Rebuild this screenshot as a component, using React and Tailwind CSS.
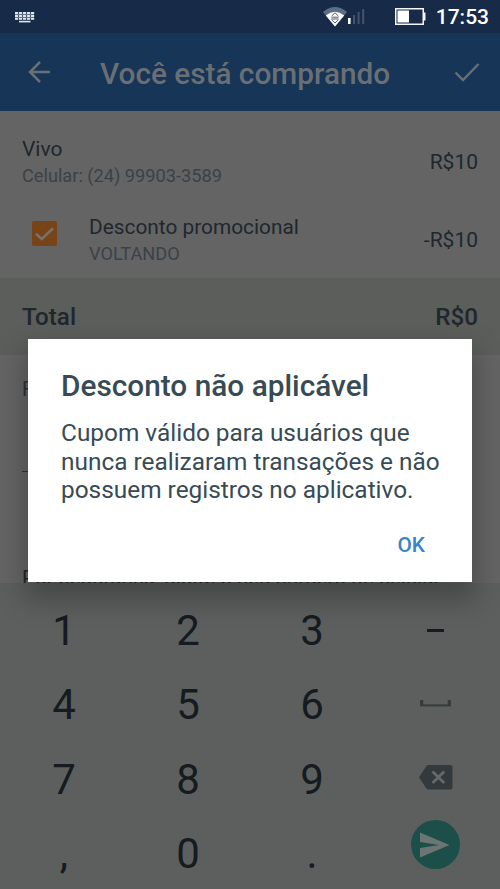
import React, { useState } from 'react';

const KeyboardIcon = () => (
    <svg width="20" height="12" viewBox="0 0 20 12" fill="#dfe6ee">
        {[0, 4, 8, 12, 16].map((x) => (
            <g key={x}>
                <rect x={x} y="1" width="3.2" height="2" />
                <rect x={x} y="4" width="3.2" height="2" />
                <rect x={x} y="7" width="3.2" height="1.8" />
            </g>
        ))}
        <rect x="4" y="9.8" width="11.5" height="1.6" />
        <path d="M0 3.5h19M0 6.5h19" stroke="#dfe6ee" strokeWidth="0.4" />
    </svg>
);

const WifiIcon = () => (
    <svg width="24" height="20" viewBox="0 0 24 20">
        <path d="M0 5Q12 -5 24 5L12 19.5Z" fill="#5f6d83" />
        <path d="M2.8 8.4Q12 1.2 21.2 8.4L12 19.5Z" fill="#fff" />
        <path d="M8.6 9L12 5.8L15.4 9M8.6 12.8L12 16L15.4 12.8M8.4 10.2h7.2M8.4 12h7.2" fill="none" stroke="#3c4a61" strokeWidth="0.9" />
    </svg>
);

const SignalIcon = () => (
    <svg width="17" height="15" viewBox="0 0 17 15">
        <rect x="0" y="9" width="2.6" height="6" fill="#fff" />
        <rect x="5" y="6" width="2" height="9" fill="#45536b" />
        <rect x="9.6" y="3" width="2" height="12" fill="#45536b" />
        <rect x="14.2" y="0" width="2" height="15" fill="#45536b" />
    </svg>
);

const BatteryIcon = () => (
    <svg width="31" height="17" viewBox="0 0 31 17">
        <rect x="0.75" y="0.75" width="27.5" height="15.5" fill="none" stroke="#f4f6f8" strokeWidth="1.5" />
        <rect x="2.5" y="2.5" width="11.5" height="12" fill="#fff" />
        <rect x="28" y="4.5" width="2.5" height="8" fill="#f4f6f8" />
    </svg>
);

const SpaceIcon = () => (
    <svg width="31" height="7" viewBox="0 0 31 7">
        <path d="M1.7 0V5.4M29.3 0V5.4" stroke="#363c3e" strokeWidth="3.2" />
        <path d="M0.1 5.4H30.9" stroke="#363c3e" strokeWidth="2" />
    </svg>
);

const BackspaceIcon = () => (
    <svg width="34" height="25" viewBox="0 0 34 25">
        <path d="M9.5 0H31.5Q33.5 0 33.5 2V22.5Q33.5 24.5 31.5 24.5H9.5Q8 24.5 7.2 23.3L0 12.2L7.2 1.2Q8 0 9.5 0Z" fill="#333a3d" />
        <path d="M13.5 6.5L25.2 18M25.2 6.5L13.5 18" stroke="#656968" strokeWidth="2.8" />
    </svg>
);

const SendIcon = () => (
    <span className="flex h-[49px] w-[49px] items-center justify-center rounded-full bg-[#1d4f4a]">
        <svg width="30" height="26" viewBox="0 0 30 26">
            <path d="M0 0.5L29.5 13L0 25.5V16L19 13L0 10Z" fill="#6b7573" />
        </svg>
    </span>
);

const keys = ['1', '2', '3', '–', '4', '5', '6', 'space', '7', '8', '9', 'backspace', ',', '0', '.', 'send'];

const Key = ({ value }) => {
    if (value === 'space') return <span className="pr-px pb-[4px]"><SpaceIcon /></span>;
    if (value === 'backspace') return <span className="pr-px pb-[4px]"><BackspaceIcon /></span>;
    if (value === 'send') return <span className="pr-[2px] pb-[19px]"><SendIcon /></span>;
    if (value === '–') return <span className="mr-[2px] mb-px h-[3px] w-[17px] bg-[#151b20]" />;
    return value;
};

const App = () => {
    const [open, setOpen] = useState(true);
    const [checked, setChecked] = useState(true);

    return (
        <div className="relative flex h-[889px] w-[500px] flex-col overflow-hidden bg-[#646464] font-['Roboto',sans-serif] text-[#20272d]">
            {/* Status bar */}
            <div className="flex h-[33px] shrink-0 items-center bg-[#172a47] pr-[11px] pl-[15px] text-white">
                <KeyboardIcon />
                <div className="ml-auto flex items-center">
                    <WifiIcon />
                    <span className="ml-px"><SignalIcon /></span>
                    <span className="ml-[30px]"><BatteryIcon /></span>
                    <span className="ml-[10px] pt-[2px] text-[21px] leading-[31px] font-medium">17:53</span>
                </div>
            </div>

            {/* App bar */}
            <header className="flex h-[78px] shrink-0 items-center bg-[#173556] pr-[20px] pl-[28px] text-[#696f75]">
                <svg width="23" height="22" viewBox="0 0 23 22" fill="none" stroke="currentColor" strokeWidth="2.5">
                    <path d="M22 11H2M12 1L2 11L12 21" />
                </svg>
                <h1 className="ml-[49px] pt-[3px] text-[29.75px] leading-[75px] font-medium whitespace-nowrap">Você está comprando</h1>
                <svg className="ml-auto" width="26" height="20" viewBox="0 0 26 20" fill="none" stroke="currentColor" strokeWidth="2.4">
                    <path d="M1.5 10.5L9 18L24.5 2" />
                </svg>
            </header>

            {/* Items */}
            <section className="flex h-[167px] shrink-0 flex-col px-[22px]">
                <div className="flex h-[78px] items-center justify-between pt-[22px]">
                    <div className="whitespace-nowrap">
                        <p className="text-[21px] leading-[28px]">Vivo</p>
                        <p className="text-[18.2px] leading-[25px] text-[#3a4249]">Celular: (24) 99903-3589</p>
                    </div>
                    <span className="pt-[3px] text-[21px]">R$10</span>
                </div>
                <div className="flex h-[78px] items-center pt-[22px]">
                    <button onClick={() => setChecked(!checked)} className="mb-[11px] ml-[10px] flex h-[25px] w-[25px] items-center justify-center rounded-[2px] bg-[#774417]">
                        {checked && (
                            <svg width="19" height="14" viewBox="0 0 19 14" fill="none" stroke="#77706b" strokeWidth="2.6">
                                <path d="M1 6.8L6.8 12L18 1.2" />
                            </svg>
                        )}
                    </button>
                    <div className="ml-[32px] whitespace-nowrap">
                        <p className="text-[20.85px] leading-[28px]">Desconto promocional</p>
                        <p className="text-[18.2px] leading-[25px] text-[#3a4249]">VOLTANDO</p>
                    </div>
                    <span className="ml-auto pt-[3px] text-[21px]">-R$10</span>
                </div>
            </section>

            <section className="flex h-[77px] shrink-0 items-center justify-between bg-[#5b5e5a] px-[22px] pt-[2px] text-[24.2px] font-medium">
                <span>Total</span>
                <span>R$0</span>
            </section>

            {/* Form behind the dialog */}
            <section className="flex h-[228px] shrink-0 flex-col overflow-hidden px-[22px] pt-[21px]">
                <p className="text-[20px] leading-[26px] text-[#2b3236]">F</p>
                <div className="h-[70px] w-[400px] border-b border-[#30383b]" />
                <p className="mt-auto h-[17px] shrink-0 text-[20.7px] leading-[25px] whitespace-nowrap">Por segurança, digite o seu número de celular</p>
            </section>

            {/* Keypad */}
            <section className="grid h-[306px] shrink-0 auto-rows-[74.3px] grid-cols-4 bg-[#5c5f5e] px-[2px] pt-[11px] text-[42px] leading-none text-[#151b20]">
                {keys.map((key) => (
                    <button key={key} className="flex items-center justify-center">
                        <Key value={key} />
                    </button>
                ))}
            </section>

            {open && (
                <div role="dialog" className="absolute top-[339px] left-[28px] flex h-[243px] w-[444px] flex-col bg-white px-[33px] pt-[29px] text-[#384b55] shadow-[0_14px_26px_4px_rgba(0,0,0,0.25)]">
                    <h2 className="text-[29.8px] leading-[36px] font-medium whitespace-nowrap">Desconto não aplicável</h2>
                    <p className="mt-[15px] text-[24.4px] leading-[28.5px] whitespace-nowrap">
                        Cupom válido para usuários que<br />
                        nunca realizaram transações e não<br />
                        possuem registros no aplicativo.
                    </p>
                    <button onClick={() => setOpen(false)} className="mt-[26px] mr-[14px] self-end text-[20.8px] leading-[28px] font-medium text-[#3b82c8]">OK</button>
                </div>
            )}
        </div>
    );
};

export default App;
